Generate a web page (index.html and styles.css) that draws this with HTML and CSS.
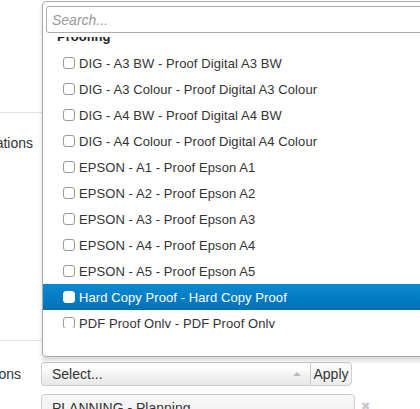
FILE: index.html
```html
<!DOCTYPE html>
<html>
<head>
<meta charset="utf-8">
<link rel="stylesheet" href="styles.css">
</head>
<body>
<div class="page">
  <div class="form">
    <div class="row row-first">
      <div class="label label-a"><span>Operations</span></div>
    </div>
    <div class="row row-second">
      <div class="controls">
        <div class="label label-b"><span>Options</span></div>
        <div class="select-group">
          <div class="select">
            <span class="select-text">Select...</span>
            <span class="select-arrow"></span>
          </div>
          <button class="apply">Apply</button>
        </div>
      </div>
      <div class="chosen-row">
        <div class="chosen-item">PLANNING - Planning</div>
        <span class="remove">&#10006;</span>
      </div>
    </div>
  </div>

  <div class="drop">
    <div class="search-wrap">
      <input class="search" type="text" placeholder="Search...">
    </div>
    <div class="results">
      <ul class="results-inner">
        <li class="group">Proofing</li>
        <li class="opt"><span class="cb"></span>DIG - A3 BW - Proof Digital A3 BW</li>
        <li class="opt"><span class="cb"></span>DIG - A3 Colour - Proof Digital A3 Colour</li>
        <li class="opt"><span class="cb"></span>DIG - A4 BW - Proof Digital A4 BW</li>
        <li class="opt"><span class="cb"></span>DIG - A4 Colour - Proof Digital A4 Colour</li>
        <li class="opt"><span class="cb"></span>EPSON - A1 - Proof Epson A1</li>
        <li class="opt"><span class="cb"></span>EPSON - A2 - Proof Epson A2</li>
        <li class="opt"><span class="cb"></span>EPSON - A3 - Proof Epson A3</li>
        <li class="opt"><span class="cb"></span>EPSON - A4 - Proof Epson A4</li>
        <li class="opt"><span class="cb"></span>EPSON - A5 - Proof Epson A5</li>
        <li class="opt active"><span class="cb"></span>Hard Copy Proof - Hard Copy Proof</li>
        <li class="opt"><span class="cb"></span>PDF Proof Only - PDF Proof Only</li>
        <li class="opt"><span class="cb"></span>PDF Proof Plus - PDF Proof Plus</li>
      </ul>
    </div>
  </div>
</div>
</body>
</html>
```

FILE: styles.css
```css
* { box-sizing: border-box; }
html, body { margin: 0; padding: 0; background: #fff; }
body {
  font-family: "Liberation Sans", Arial, Helvetica, sans-serif;
  font-size: 13px;
  color: #333;
}
.page {
  width: 420px;
  height: 409px;
  overflow: hidden;
  position: relative;
}
.form { padding-top: 112px; }
.row { border-top: 1px solid #e5e5e5; }
.row-first { height: 228px; padding-top: 20px; }
.row-second { padding-top: 21px; }
.label {
  display: flex;
  justify-content: flex-end;
  overflow: hidden;
  white-space: nowrap;
  line-height: 20px;
  font-size: 14px;
  color: #333;
}
.label-a { width: 33px; }
.label-b { width: 21px; margin-right: 20px; line-height: 24px; }
.controls { display: flex; align-items: center; }
.select-group { display: flex; height: 24px; }
.select {
  width: 269px;
  height: 24px;
  border: 1px solid #ccc;
  border-right: none;
  border-radius: 4px 0 0 4px;
  background: linear-gradient(#fff 20%, #f0f0f0 60%, #e8e8e8);
  display: flex;
  align-items: center;
  justify-content: space-between;
  padding: 0 9px 0 10px;
  font-size: 14px;
  color: #333;
}
.select-arrow {
  width: 0; height: 0;
  border-left: 4px solid transparent;
  border-right: 4px solid transparent;
  border-bottom: 4px solid #bbb;
}
.apply {
  height: 24px;
  width: 42px;
  border: 1px solid #ccc;
  border-radius: 0 4px 4px 0;
  background: linear-gradient(#fff, #ececec);
  font-family: inherit;
  font-size: 14px;
  color: #333;
  padding: 0;
}
.chosen-row { display: flex; align-items: flex-start; margin: 8px 0 0 41px; }
.chosen-item {
  width: 314px;
  height: 26px;
  border: 1px solid #ccc;
  border-radius: 4px;
  background: linear-gradient(#f8f8f8, #eee);
  padding: 5px 10px;
  font-size: 14px;
  color: #333;
}
.remove { color: #c8c8c8; font-size: 11px; margin: 6px 0 0 6px; }

.drop {
  position: absolute;
  left: 42px;
  top: 1px;
  width: 400px;
  height: 356px;
  border: 1px solid #aaa;
  border-radius: 4px;
  background: #fff;
  box-shadow: 0 4px 5px rgba(0,0,0,0.15);
  z-index: 10;
}
.search-wrap { padding: 4px 3px 4px 3px; }
.search {
  display: block;
  width: 100%;
  height: 27px;
  border: 1px solid #aaa;
  border-radius: 3px;
  padding: 4px 5px;
  font-family: inherit;
  font-size: 14px;
  outline: none;
  background: #fff;
}
.search::placeholder { color: #999; font-style: italic; }
.results { height: 291px; overflow: hidden; }
.results-inner { list-style: none; margin: -13px 0 0 0; padding: 0; }
.group {
  height: 26px;
  line-height: 26px;
  padding-left: 14px;
  font-weight: bold;
  color: #222;
}
.opt {
  height: 26px;
  display: flex;
  align-items: center;
  padding-left: 20px;
  color: #333;
  white-space: nowrap;
  letter-spacing: 0.08px;
}
.cb {
  width: 12px;
  height: 12px;
  border: 1px solid #999;
  border-radius: 3px;
  background: #fff;
  margin-right: 4px;
  flex: none;
}
.opt.active {
  background: linear-gradient(#0a8ad2, #0070b8);
  color: #fff;
}
.opt.active .cb { border-color: #fff; }
```
